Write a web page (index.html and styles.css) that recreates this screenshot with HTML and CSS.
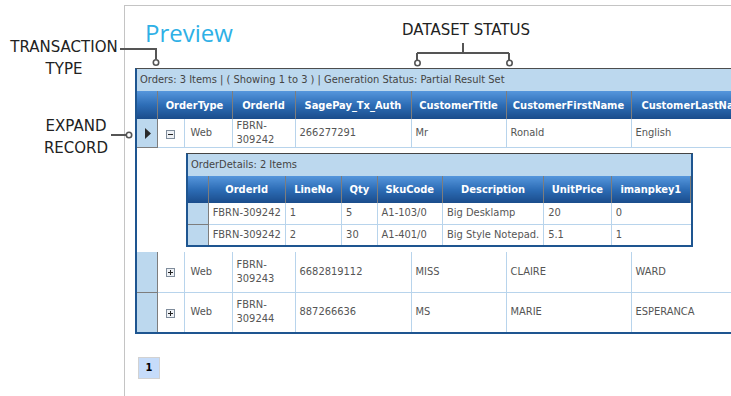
FILE: index.html
```html
<!DOCTYPE html>
<html lang="en">
<head>
    <meta charset="UTF-8">
    <meta name="viewport" content="width=device-width, initial-scale=1.0">
    <title>Preview - Orders</title>
    <link rel="stylesheet" href="styles.css">
</head>
<body>
    <div class="panel">
        <h1 class="title">Preview</h1>

        <div class="grid">
            <div class="grid-status">Orders: 3 Items | ( Showing 1 to 3 ) | Generation Status: Partial Result Set</div>
            <table class="grid-table orders">
                <colgroup>
                    <col style="width: 20px">
                    <col style="width: 27px">
                    <col style="width: 48px">
                    <col style="width: 63px">
                    <col style="width: 116px">
                    <col style="width: 95px">
                    <col style="width: 125px">
                    <col style="width: 130px">
                </colgroup>
                <thead>
                    <tr>
                        <th class="indicator"></th>
                        <th colspan="2">OrderType</th>
                        <th>OrderId</th>
                        <th>SagePay_Tx_Auth</th>
                        <th>CustomerTitle</th>
                        <th>CustomerFirstName</th>
                        <th>CustomerLastName</th>
                    </tr>
                </thead>
                <tbody>
                    <tr class="row expanded">
                        <td class="indicator">
                            <svg class="arrow" width="6" height="11" viewBox="0 0 6 11"><path d="M0 0L6 5.5L0 11Z"/></svg>
                        </td>
                        <td class="toggle">
                            <svg width="9" height="9" viewBox="0 0 9 9"><rect x="0.5" y="0.5" width="8" height="8" fill="#eef1f5" stroke="#7f8c9b"/><path d="M2 4.5h5" stroke="#222"/></svg>
                        </td>
                        <td>Web</td>
                        <td>FBRN-<br>309242</td>
                        <td>266277291</td>
                        <td>Mr</td>
                        <td>Ronald</td>
                        <td>English</td>
                    </tr>
                    <tr class="detail-row">
                        <td colspan="2"></td>
                        <td colspan="6" class="detail-cell">
                            <div class="grid nested">
                                <div class="grid-status">OrderDetails: 2 Items</div>
                                <table class="grid-table">
                                    <colgroup>
                                        <col style="width: 21px">
                                        <col style="width: 76px">
                                        <col style="width: 57px">
                                        <col style="width: 36px">
                                        <col style="width: 66px">
                                        <col style="width: 99px">
                                        <col style="width: 68px">
                                        <col style="width: 80px">
                                    </colgroup>
                                    <thead>
                                        <tr>
                                            <th class="indicator"></th>
                                            <th>OrderId</th>
                                            <th>LineNo</th>
                                            <th>Qty</th>
                                            <th>SkuCode</th>
                                            <th>Description</th>
                                            <th>UnitPrice</th>
                                            <th>imanpkey1</th>
                                        </tr>
                                    </thead>
                                    <tbody>
                                        <tr>
                                            <td class="indicator"></td>
                                            <td>FBRN-309242</td>
                                            <td>1</td>
                                            <td>5</td>
                                            <td>A1-103/0</td>
                                            <td>Big Desklamp</td>
                                            <td>20</td>
                                            <td>0</td>
                                        </tr>
                                        <tr>
                                            <td class="indicator"></td>
                                            <td>FBRN-309242</td>
                                            <td>2</td>
                                            <td>30</td>
                                            <td>A1-401/0</td>
                                            <td>Big Style Notepad.</td>
                                            <td>5.1</td>
                                            <td>1</td>
                                        </tr>
                                    </tbody>
                                </table>
                            </div>
                        </td>
                    </tr>
                    <tr class="row tall">
                        <td class="indicator"></td>
                        <td class="toggle">
                            <svg width="9" height="9" viewBox="0 0 9 9"><rect x="0.5" y="0.5" width="8" height="8" fill="#eef1f5" stroke="#7f8c9b"/><path d="M2 4.5h5M4.5 2v5" stroke="#222"/></svg>
                        </td>
                        <td>Web</td>
                        <td>FBRN-<br>309243</td>
                        <td>6682819112</td>
                        <td>MISS</td>
                        <td>CLAIRE</td>
                        <td>WARD</td>
                    </tr>
                    <tr class="row tall">
                        <td class="indicator"></td>
                        <td class="toggle">
                            <svg width="9" height="9" viewBox="0 0 9 9"><rect x="0.5" y="0.5" width="8" height="8" fill="#eef1f5" stroke="#7f8c9b"/><path d="M2 4.5h5M4.5 2v5" stroke="#222"/></svg>
                        </td>
                        <td>Web</td>
                        <td>FBRN-<br>309244</td>
                        <td>887266636</td>
                        <td>MS</td>
                        <td>MARIE</td>
                        <td>ESPERANCA</td>
                    </tr>
                </tbody>
            </table>
        </div>

        <div class="pager">
            <span class="page current">1</span>
        </div>
    </div>

    <!-- callouts -->
    <div class="callout callout-type">TRANSACTION<br>TYPE</div>
    <div class="callout callout-status">DATASET STATUS</div>
    <div class="callout callout-expand">EXPAND<br>RECORD</div>
    <svg class="connectors" width="731" height="396" viewBox="0 0 731 396">
        <g fill="none" stroke="#555" stroke-width="2">
            <path d="M120 49H156V59"/>
            <path d="M463 43V53M417 53H509M417 53V60M509 53V60"/>
            <path d="M111 135H126"/>
        </g>
        <g fill="#fff" stroke="#555" stroke-width="1.6">
            <circle cx="156" cy="62.5" r="2.7"/>
            <circle cx="417.5" cy="63" r="2.7"/>
            <circle cx="509.5" cy="63" r="2.7"/>
            <circle cx="129" cy="135" r="2.7"/>
        </g>
    </svg>
</body>
</html>
```

FILE: styles.css
```css
:root {
    --grid-blue: #1e5590;
    --status-bg: #bcd8ee;
    --cell-line: #b8d4ec;
    --indicator-line: #7d7d7d;
    --text-color: #555;
}

* {
    margin: 0;
    padding: 0;
    box-sizing: border-box;
}

html, body {
    overflow: hidden;
}

body {
    position: relative;
    width: 731px;
    height: 396px;
    background: white;
    font-family: 'DejaVu Sans Condensed', 'DejaVu Sans', sans-serif;
    font-stretch: condensed;
    font-size: 11px;
    color: var(--text-color);
}

.panel {
    margin: 5px 0 0 124px;
    padding-left: 10px;
    border-left: 1px solid #c4c4c4;
    border-top: 1px solid #c4c4c4;
    height: 391px;
}

.title {
    margin: 12px 0 20px 10px;
    font-family: 'Open Sans', sans-serif;
    font-stretch: normal;
    font-weight: normal;
    font-size: 24px;
    line-height: 30px;
    color: #2eb0e6;
}

.grid {
    width: 640px;
    border-left: 2px solid var(--grid-blue);
    border-top: 1px solid #4d4d4d;
    border-bottom: 2px solid var(--grid-blue);
}

.grid-status {
    height: 22px;
    line-height: 22px;
    padding-left: 3px;
    background: var(--status-bg);
    color: #444;
    white-space: nowrap;
}

.grid-table {
    border-collapse: collapse;
    table-layout: fixed;
}

.grid-table th {
    height: 28px;
    padding: 0 4px;
    background: linear-gradient(#5696dc, #2d6db6 50%, #1a4c8b);
    color: white;
    font-weight: bold;
    text-align: center;
    white-space: nowrap;
    border-right: 1px solid var(--indicator-line);
}

.grid-table td {
    padding: 0 4px;
    line-height: 14px;
    vertical-align: middle;
    white-space: nowrap;
    border-right: 1px solid var(--cell-line);
    border-bottom: 1px solid var(--cell-line);
}

.grid-table td.indicator {
    padding: 0;
    background: var(--status-bg);
    border-right: 1px solid var(--indicator-line);
    border-bottom: 1px solid var(--indicator-line);
    text-align: center;
}

.grid-table td.toggle {
    padding: 2px 0 0;
    text-align: center;
}

.toggle svg,
.arrow {
    display: inline-block;
    vertical-align: middle;
}

.arrow {
    fill: #2a2a2a;
    margin-left: 2px;
}

.orders .row {
    height: 28px;
}

.orders .row.tall {
    height: 40px;
}

.orders .row.tall:last-child td {
    border-bottom: none;
}

.orders .row td:nth-child(3) {
    padding-left: 6px;
}

.orders .detail-row > td {
    border: none;
    padding: 0;
}

.orders .detail-row > td.detail-cell {
    padding: 5px 0 5px 2px;
}

.grid.nested {
    width: 507px;
    border-right: 2px solid var(--grid-blue);
    border-top-color: #444;
}

.nested .grid-table th {
    height: 27px;
}

.nested .grid-table tr td {
    height: 21px;
}

.nested .grid-table tr:last-child td {
    border-bottom: none;
}

.nested .grid-table td:last-child {
    border-right: none;
}

.pager {
    margin: 23px 0 0 3px;
}

.page {
    display: inline-block;
    width: 22px;
    height: 22px;
    line-height: 20px;
    text-align: center;
    border: 1px solid #d2d2d2;
    background: #c6dcfa;
    color: #000;
    font-weight: bold;
}

.callout {
    position: absolute;
    text-align: center;
    font-family: 'DejaVu Sans', sans-serif;
    font-stretch: normal;
    font-size: 15px;
    line-height: 22px;
    color: #222;
    white-space: nowrap;
}

.callout-type {
    left: 4px;
    top: 36px;
    width: 120px;
}

.callout-status {
    left: 386px;
    top: 19px;
    width: 160px;
}

.callout-expand {
    left: 36px;
    top: 115px;
    width: 80px;
}

.connectors {
    position: absolute;
    left: 0;
    top: 0;
    pointer-events: none;
}
```
